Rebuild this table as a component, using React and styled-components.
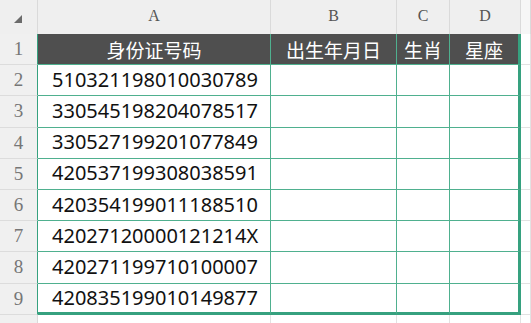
import React from "react";
import styled, { createGlobalStyle } from "styled-components";

const GlobalStyle = createGlobalStyle`
  html, body {
    margin: 0;
    padding: 0;
    background: #ffffff;
  }
  body {
    width: 531px;
    height: 323px;
    overflow: hidden;
  }
`;

const GREEN = "#36a17f";
const GREEN_LINE = "#4fb08f";

const ids = [
  "510321198010030789",
  "330545198204078517",
  "330527199201077849",
  "420537199308038591",
  "420354199011188510",
  "42027120000121214X",
  "420271199710100007",
  "420835199010149877",
];

const headers = ["身份证号码", "出生年月日", "生肖", "星座"];
const letters = ["A", "B", "C", "D"];

const Sheet = styled.div`
  display: grid;
  grid-template-columns: 38px 233px 126px 53px 71px 1fr;
  grid-template-rows: 34px repeat(9, 31.2px) 20px;
  width: 531px;
`;

const Corner = styled.div`
  background: #efefef;
  border-right: 1px solid #dadada;
  position: relative;
`;

// small select-all triangle in the corner
const Triangle = styled.div`
  position: absolute;
  left: 14px;
  top: 15px;
  width: 0;
  height: 0;
  border-left: 8px solid transparent;
  border-bottom: 8px solid #6b6b6b;
`;

const ColHead = styled.div`
  background: ${(p) => (p.$dim ? "#f6f6f6" : "#efefef")};
  border-right: 1px solid #dadada;
  display: flex;
  align-items: center;
  justify-content: center;
  font-family: "Liberation Serif", "DejaVu Serif", serif;
  font-size: 16px;
  color: #555;
  padding-bottom: 3px;
  box-sizing: border-box;
`;

const RowHead = styled.div`
  background: #f0f0f0;
  border-bottom: 1px solid #dcdcdc;
  border-right: 1px solid ${(p) => (p.$sel ? GREEN : "#dadada")};
  box-sizing: border-box;
  display: flex;
  align-items: center;
  justify-content: center;
  font-family: "Liberation Serif", "DejaVu Serif", serif;
  font-size: 19px;
  color: #767676;
`;

const TitleCell = styled.div`
  background: #4f4f4f;
  color: #ffffff;
  box-sizing: border-box;
  border-right: ${(p) => (p.$last ? `3px solid ${GREEN}` : `1px solid ${GREEN_LINE}`)};
  border-bottom: 1px solid ${GREEN_LINE};
  display: flex;
  align-items: center;
  justify-content: center;
  font-family: "Noto Sans CJK SC", "Noto Sans", sans-serif;
  font-size: 19px;
`;

const Cell = styled.div`
  box-sizing: border-box;
  border-right: ${(p) => (p.$last ? `3px solid ${GREEN}` : `1px solid ${GREEN_LINE}`)};
  border-bottom: ${(p) => (p.$bottom ? `3px solid ${GREEN}` : `1px solid ${GREEN_LINE}`)};
  display: flex;
  align-items: center;
  padding-left: 14px;
  font-family: "Noto Sans", "Noto Sans CJK SC", sans-serif;
  font-size: 20px;
  color: #111;
  padding-bottom: ${(p) => (p.$bottom ? "0" : "2px")};
`;

const Blank = styled.div`
  box-sizing: border-box;
  border-right: 1px solid #e2e2e2;
  border-bottom: 1px solid #e2e2e2;
`;

export default function App() {
  return (
    <>
      <GlobalStyle />
      <Sheet>
        <Corner>
          <Triangle />
        </Corner>
        {letters.map((l) => (
          <ColHead key={l}>{l}</ColHead>
        ))}
        <ColHead $dim />

        <RowHead $sel>1</RowHead>
        {headers.map((h, i) => (
          <TitleCell key={h} $last={i === 3}>
            {h}
          </TitleCell>
        ))}
        <Blank />

        {ids.map((id, r) => {
          const bottom = r === ids.length - 1;
          return (
            <React.Fragment key={id}>
              <RowHead $sel>{r + 2}</RowHead>
              <Cell $bottom={bottom}>{id}</Cell>
              <Cell $bottom={bottom} />
              <Cell $bottom={bottom} />
              <Cell $bottom={bottom} $last />
              <Blank />
            </React.Fragment>
          );
        })}

        <RowHead />
        <Blank />
        <Blank />
        <Blank />
        <Blank />
        <Blank />
      </Sheet>
    </>
  );
}
